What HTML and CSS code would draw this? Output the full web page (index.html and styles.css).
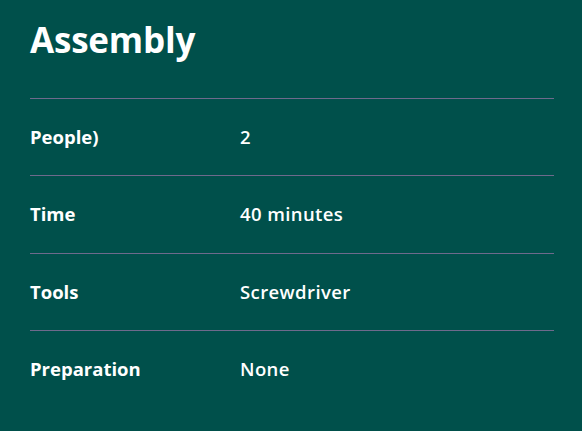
FILE: index.html
```html
<!DOCTYPE html>
<html>
<head>
<meta charset="utf-8">
<link rel="stylesheet" href="styles.css">
</head>
<body>
<section class="card">
  <h1 class="title">Assembly</h1>
  <dl class="specs">
    <div class="row"><dt>People)</dt><dd>2</dd></div>
    <div class="row"><dt>Time</dt><dd>40 minutes</dd></div>
    <div class="row"><dt>Tools</dt><dd>Screwdriver</dd></div>
    <div class="row"><dt>Preparation</dt><dd>None</dd></div>
  </dl>
</section>
</body>
</html>
```
FILE: styles.css
```css
html, body {
  margin: 0;
  padding: 0;
  background: #00504b;
}
.card {
  width: 582px;
  height: 431px;
  box-sizing: border-box;
  padding: 17px 28px 0 30px;
  color: #ffffff;
  font-family: "Open Sans", sans-serif;
}
.title {
  margin: 0;
  height: 81px;
  font-size: 35px;
  font-weight: 700;
  line-height: 46px;
  letter-spacing: -0.2px;
}
.specs {
  margin: 0;
}
.row {
  display: grid;
  grid-template-columns: 210px 1fr;
  align-items: center;
  height: 76.33px;
  border-top: 1px solid #6e6a8c;
}
.row dt, .row dd {
  margin: 0;
  font-size: 18.5px;
  line-height: 22px;
}
.row dt {
  font-weight: 700;
}
.row dd {
  font-weight: 600;
  letter-spacing: 0.4px;
}
```
